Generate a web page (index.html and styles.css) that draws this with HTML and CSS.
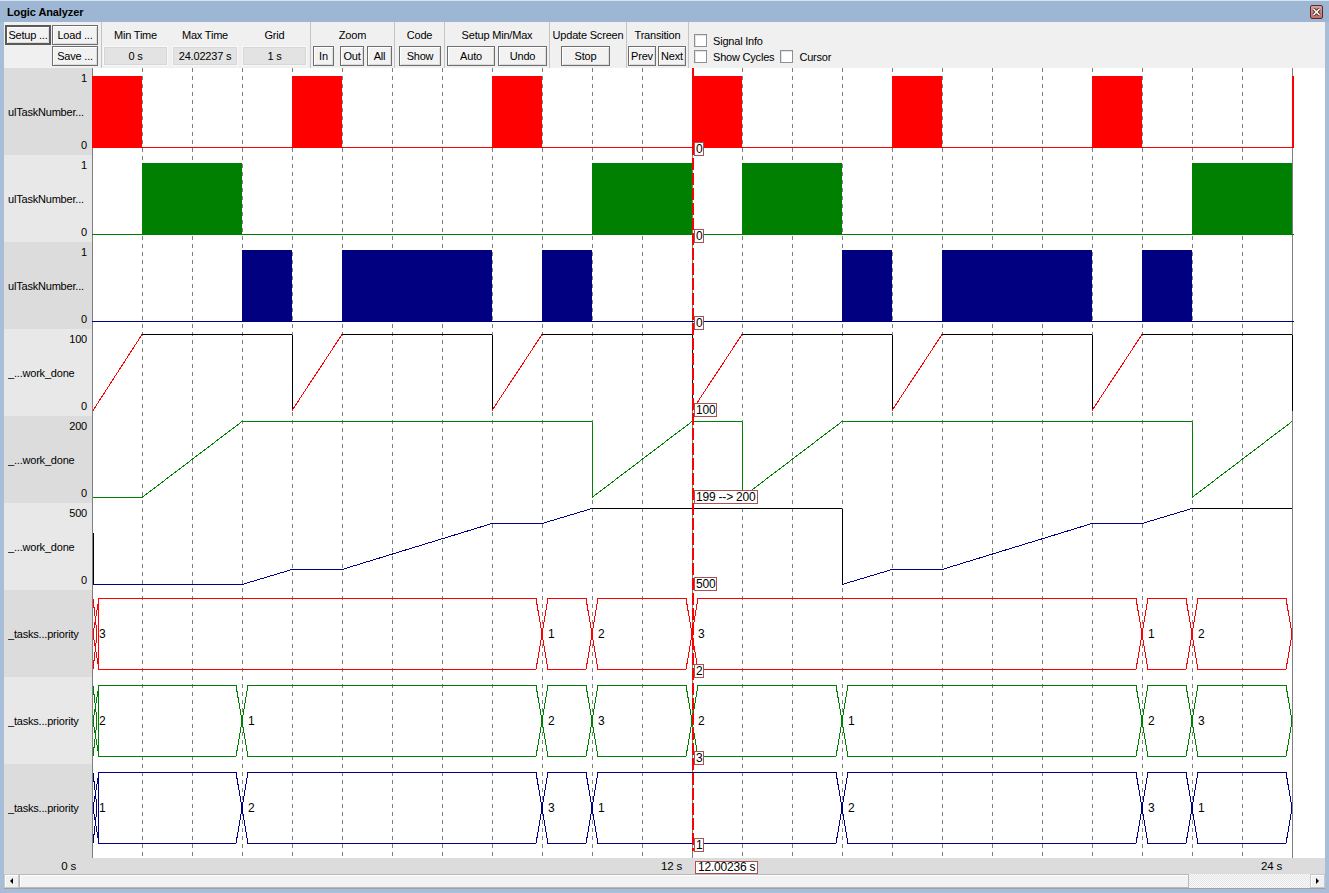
FILE: index.html
```html
<!DOCTYPE html>
<html>
<head>
<meta charset="utf-8">
<title>Logic Analyzer</title>
<link rel="stylesheet" href="styles.css">
</head>
<body>
<div class="window">
  <div class="titlebar">
    <span class="title">Logic Analyzer</span>
    <span class="close"><svg width="11" height="12" viewBox="0 0 11 12"><path d="M2.5 3 L8.5 9 M8.5 3 L2.5 9" stroke="#4a2020" stroke-width="3.2"/><path d="M2.5 3 L8.5 9 M8.5 3 L2.5 9" stroke="#ffffff" stroke-width="1.6"/></svg></span>
  </div>
  <div class="body">
    <div class="toolbar">
      <div class="group g-file">
        <button class="btn btn-default">Setup ...</button>
        <button class="btn">Load ...</button>
        <button class="btn btn-save">Save ...</button>
      </div>
      <div class="group g-time">
        <div class="field"><div class="gtitle">Min Time</div><div class="value w65">0 s</div></div>
        <div class="field"><div class="gtitle">Max Time</div><div class="value w66">24.02237 s</div></div>
        <div class="field"><div class="gtitle">Grid</div><div class="value w65">1 s</div></div>
      </div>
      <div class="group g-zoom">
        <div class="gtitle">Zoom</div>
        <div class="btnrow"><button class="btn b-in">In</button><button class="btn b-out">Out</button><button class="btn b-all">All</button></div>
      </div>
      <div class="group g-code">
        <div class="gtitle">Code</div>
        <div class="btnrow"><button class="btn b-show">Show</button></div>
      </div>
      <div class="group g-minmax">
        <div class="gtitle">Setup Min/Max</div>
        <div class="btnrow"><button class="btn b-auto">Auto</button><button class="btn b-undo">Undo</button></div>
      </div>
      <div class="group g-update">
        <div class="gtitle">Update Screen</div>
        <div class="btnrow"><button class="btn b-stop">Stop</button></div>
      </div>
      <div class="group g-trans">
        <div class="gtitle">Transition</div>
        <div class="btnrow"><button class="btn b-prev">Prev</button><button class="btn b-next">Next</button></div>
      </div>
      <div class="group g-opts">
        <label class="chk"><span class="box"></span><span>Signal Info</span></label>
        <div class="chkrow">
          <label class="chk"><span class="box"></span><span>Show Cycles</span></label>
          <label class="chk"><span class="box"></span><span>Cursor</span></label>
        </div>
      </div>
    </div>

    <div class="chart">
      <div class="labels">
        <div class="lrow"><span class="smax">1</span><span class="name">ulTaskNumber...</span><span class="smin">0</span></div>
        <div class="lrow light"><span class="smax">1</span><span class="name">ulTaskNumber...</span><span class="smin">0</span></div>
        <div class="lrow"><span class="smax">1</span><span class="name">ulTaskNumber...</span><span class="smin">0</span></div>
        <div class="lrow light"><span class="smax">100</span><span class="name">_...work_done</span><span class="smin">0</span></div>
        <div class="lrow"><span class="smax">200</span><span class="name">_...work_done</span><span class="smin">0</span></div>
        <div class="lrow light"><span class="smax">500</span><span class="name">_...work_done</span><span class="smin">0</span></div>
        <div class="lrow"><span class="smax"></span><span class="name">_tasks...priority</span><span class="smin"></span></div>
        <div class="lrow light"><span class="smax"></span><span class="name">_tasks...priority</span><span class="smin"></span></div>
        <div class="lrow"><span class="smax"></span><span class="name">_tasks...priority</span><span class="smin"></span></div>
      </div>
      <div class="plot">
        <svg id="plot" class="plot-svg" width="1233" height="790" viewBox="0 0 1233 790"></svg>
        <div class="cursor-vals">
          <span class="cv">0</span>
          <span class="cv">0</span>
          <span class="cv">0</span>
          <span class="cv">100</span>
          <span class="cv">199 --&gt; 200</span>
          <span class="cv">500</span>
          <span class="cv">2</span>
          <span class="cv">3</span>
          <span class="cv">1</span>
        </div>
      </div>
    </div>

    <div class="axis">
      <span class="tick t0">0 s</span>
      <span class="tick t12">12 s</span>
      <span class="tick t24">24 s</span>
      <span class="cursor-time">12.00236 s</span>
    </div>

    <div class="hscroll">
      <span class="sbtn"><span class="arr-l"></span></span>
      <span class="thumb"></span>
      <span class="track"></span>
      <span class="sbtn"><span class="arr-r"></span></span>
    </div>
  </div>
</div>
<script src="script.js"></script>
</body>
</html>
```

FILE: styles.css
```css
* { box-sizing: border-box; margin: 0; padding: 0; }
html, body { width: 1329px; height: 893px; overflow: hidden; }
body {
  margin: 0;
  font-family: "Liberation Sans", Arial, sans-serif;
  font-size: 11px;
  letter-spacing: -0.2px;
  color: #000;
  background: #a8bed8;
}
.window {
  width: 1329px;
  height: 893px;
  display: flex;
  flex-direction: column;
  background: #a8bed8;
  border-top: 1px solid #d8e4f0;
}
.titlebar {
  height: 21px;
  flex: none;
  background: #9db6d3;
  display: flex;
  align-items: center;
  justify-content: space-between;
  padding: 1px 6px 0 7px;
}
.title { font-weight: bold; font-size: 11px; letter-spacing: -0.1px; }
.close {
  width: 13px;
  height: 14px;
  border: 1px solid #5a2a2a;
  border-radius: 2px;
  background: linear-gradient(#d9a29c, #c06f68);
  display: flex;
  align-items: center;
  justify-content: center;
}
.close svg { display: block; }

.body {
  flex: 1;
  margin: 0 4px 4px 4px;
  display: flex;
  flex-direction: column;
  background: #f0f0f0;
  min-height: 0;
}

/* toolbar */
.toolbar { height: 46px; flex: none; display: flex; background: #f0f0f0; }
.group {
  border-right: 1px solid #c4c4c4;
  padding-top: 3px;
  display: flex;
  flex-direction: column;
}
.gtitle { height: 21px; line-height: 20px; text-align: center; white-space: nowrap; }
.btnrow { display: flex; height: 20px; }
.btn {
  font-family: inherit;
  font-size: 11px;
  letter-spacing: -0.2px;
  color: #000;
  height: 20px;
  background: #f2f2f2;
  border: 1px solid #6e6e6e;
  box-shadow: inset 1px 1px 0 #ffffff, inset -1px -1px 0 #dcdcdc;
  padding: 0;
  text-align: center;
  line-height: 17px;
  cursor: default;
}
.btn-default { border: 2px solid #5a5a5a; line-height: 15px; }

.g-file {
  width: 98px;
  display: grid;
  grid-template-columns: 46px 46px;
  grid-template-rows: 20px 20px;
  column-gap: 1px;
  row-gap: 1px;
  padding: 3px 0 0 1px;
}
.btn-save { grid-column: 2; grid-row: 2; }

.g-time { width: 209px; flex-direction: row; gap: 4px; padding-left: 1px; }
.field { display: flex; flex-direction: column; }
.value {
  height: 20px;
  line-height: 18px;
  text-align: center;
  background: #e3e3e3;
  border: 1px solid #f9f9f9;
  outline: 1px solid #d6d6d6;
  outline-offset: -2px;
}
.w65 { width: 65px; }
.w66 { width: 66px; }

.g-zoom { width: 84px; }
.g-zoom .btnrow { padding-left: 2px; }
.b-in { width: 21px; }
.b-out { width: 24px; margin-left: 6px; }
.b-all { width: 25px; margin-left: 3px; }

.g-code { width: 50px; }
.g-code .btnrow { padding-left: 4px; }
.b-show { width: 42px; }

.g-minmax { width: 105px; }
.g-minmax .btnrow { padding-left: 2px; }
.b-auto { width: 48px; }
.b-undo { width: 49px; margin-left: 3px; }

.g-update { width: 77px; }
.g-update .btnrow { padding-left: 11px; }
.b-stop { width: 49px; }

.g-trans { width: 62px; }
.g-trans .btnrow { padding-left: 1px; }
.b-prev { width: 28px; }
.b-next { width: 28px; margin-left: 2px; }

.g-opts { border-right: none; padding: 12px 0 0 5px; gap: 3px; flex: 1; }
.chkrow { display: flex; gap: 6px; }
.chk { display: flex; align-items: center; gap: 6px; height: 13px; white-space: nowrap; }
.box {
  width: 13px;
  height: 13px;
  background: #fff;
  border: 1px solid #8f8f8f;
  box-shadow: inset 1px 1px 0 #e2e2e2;
}

/* chart */
.chart { height: 790px; flex: none; display: flex; }
.labels {
  width: 88px;
  flex: none;
  background: #dcdcdc;
  display: flex;
  flex-direction: column;
}
.lrow {
  height: 87px;
  flex: none;
  display: grid;
  grid-template-rows: 20px 1fr 20px;
  padding: 0 5px 0 4px;
}
.lrow.light { background: #e8e8e8; }
.smax, .smin { text-align: right; line-height: 20px; }
.name { align-self: center; white-space: nowrap; overflow: hidden; }

.plot { position: relative; flex: 1; background: #fff; }
.plot-svg { display: block; shape-rendering: crispEdges; }
.plot-svg text { font-family: "Liberation Sans", Arial, sans-serif; font-size: 12px; letter-spacing: -0.2px; }

.cursor-vals {
  position: absolute;
  left: 602px;
  top: 0;
  display: grid;
  grid-template-rows: repeat(9, 87px);
}
.cv {
  align-self: start;
  justify-self: start;
  margin-top: 74px;
  height: 14px;
  line-height: 12px;
  padding: 0 1px;
  font-size: 12px;
  background: #fff;
  border: 1px solid #a85252;
  white-space: nowrap;
}

/* axis */
.axis { height: 16px; flex: none; position: relative; background: #dcdcdc; }
.tick { position: absolute; top: 1px; line-height: 14px; font-size: 11.5px; transform: translateX(-100%); }
.t0 { left: 72px; }
.t12 { left: 678px; }
.t24 { left: 1278px; }
.cursor-time {
  position: absolute;
  left: 691px;
  top: 3px;
  height: 13px;
  line-height: 11px;
  padding: 0 2px;
  font-size: 12px;
  background: #fff;
  border: 1px solid #a85252;
}

/* scrollbar */
.hscroll {
  height: 15px;
  flex: none;
  display: flex;
  background: #f0f0f0;
  border-bottom: 1px solid #a0a0a0;
}
.sbtn {
  width: 15px;
  flex: none;
  display: flex;
  align-items: center;
  justify-content: center;
  background: #f0f0f0;
  border: 1px solid #c8c8c8;
  box-shadow: inset 1px 1px 0 #fff;
}
.arr-l { width: 0; height: 0; border-top: 3px solid transparent; border-bottom: 3px solid transparent; border-right: 3px solid #000; }
.arr-r { width: 0; height: 0; border-top: 3px solid transparent; border-bottom: 3px solid transparent; border-left: 3px solid #000; }
.thumb {
  width: 1170px;
  flex: none;
  background: #f2f2f2;
  border: 1px solid #b8b8b8;
  box-shadow: inset 1px 1px 0 #fff;
}
.track {
  flex: 1;
  background-color: #f6f6f6;
  background-image: repeating-conic-gradient(#e4e4e4 0 25%, #fafafa 0 50%);
  background-size: 2px 2px;
}
```

FILE: script.js
```js
(function () {
  var NS = 'http://www.w3.org/2000/svg';
  var svg = document.getElementById('plot');
  var H = 790, RH = 87, PX = 50;
  var RED = '#ff0000', GREEN = '#008000', NAVY = '#000080', BLACK = '#000000', GRID = '#808080';

  function el(tag, a) {
    var e = document.createElementNS(NS, tag);
    for (var k in a) e.setAttribute(k, a[k]);
    svg.appendChild(e);
    return e;
  }
  function X(t) { return t * PX; }

  /* grid */
  el('line', { x1: 0.5, x2: 0.5, y1: 0, y2: H, stroke: GRID });
  for (var t = 1; t <= 23; t++) {
    if (t === 12) continue;
    el('line', { x1: X(t) + 0.5, x2: X(t) + 0.5, y1: 0, y2: H, stroke: GRID, 'stroke-dasharray': '4 4' });
  }
  el('line', { x1: 600.5, x2: 600.5, y1: 0, y2: H, stroke: GRID });
  el('line', { x1: 1200.5, x2: 1200.5, y1: 0, y2: H, stroke: GRID });

  /* digital signals */
  var digital = [
    { c: RED, hi: [[0, 1], [4, 5], [8, 9], [12, 13], [16, 17], [20, 21], [24, 24.04]] },
    { c: GREEN, hi: [[1, 3], [10, 12], [13, 15], [22, 24]] },
    { c: NAVY, hi: [[3, 4], [5, 8], [9, 10], [15, 16], [17, 20], [21, 22]] }
  ];
  digital.forEach(function (d, r) {
    var y0 = r * RH;
    el('line', { x1: 0, x2: 1202, y1: y0 + 79.5, y2: y0 + 79.5, stroke: d.c });
    d.hi.forEach(function (iv) {
      el('rect', { x: X(iv[0]), y: y0 + 8, width: Math.max(2, X(iv[1]) - X(iv[0])), height: 72, fill: d.c });
    });
  });

  /* analog signals */
  function Y(r, v, max) { return r * RH + 5 + Math.round((1 - v / max) * 76) + 0.5; }
  function analog(r, max, pts) {
    for (var i = 1; i < pts.length; i++) {
      var a = pts[i - 1], b = pts[i];
      el('line', { x1: X(a[0]) + (a[0] === 0 ? 1 : 0), y1: Y(r, a[1], max), x2: X(b[0]), y2: Y(r, b[1], max), stroke: b[2] });
    }
  }
  var p4 = [[0, 0]];
  for (var k = 0; k < 6; k++) {
    var s = 4 * k;
    p4.push([s + 1, 100, RED], [s + 4, 100, BLACK], [s + 4, 0, BLACK]);
    if (k < 5) p4.push([s + 4, 0, RED]);
  }
  analog(3, 100, p4);

  analog(4, 200, [[0, 0], [1, 0, GREEN], [3, 200, GREEN], [10, 200, GREEN], [10, 0, GREEN], [12, 200, GREEN],
    [13, 200, GREEN], [13, 0, GREEN], [15, 200, GREEN], [22, 200, GREEN], [22, 0, GREEN], [24, 200, GREEN]]);

  analog(5, 500, [[0, 0], [3, 0, NAVY], [4, 100, NAVY], [5, 100, NAVY], [8, 400, NAVY], [9, 400, NAVY], [10, 500, NAVY],
    [15, 500, BLACK], [15, 0, BLACK], [16, 100, NAVY], [17, 100, NAVY], [20, 400, NAVY], [21, 400, NAVY],
    [22, 500, NAVY], [24, 500, BLACK]]);
  el('line', { x1: 1.5, x2: 1.5, y1: 5 * RH + 30, y2: 5 * RH + 81, stroke: BLACK });

  /* bus signals */
  function bus(r, c, segs, end) {
    var top = r * RH + 8.5, bot = r * RH + 79.5, mid = r * RH + 44;
    for (var i = 0; i < segs.length; i++) {
      var xa = i === 0 ? 1 : X(segs[i][0]);
      var xb = i + 1 < segs.length ? X(segs[i + 1][0]) : X(end);
      var sl = 6;
      el('path', {
        d: 'M' + xa + ' ' + mid + ' L' + (xa + sl) + ' ' + top + ' L' + (xb - sl) + ' ' + top + ' L' + xb + ' ' + mid +
          ' L' + (xb - sl) + ' ' + bot + ' L' + (xa + sl) + ' ' + bot + ' Z',
        fill: 'none', stroke: c
      });
      var tx = el('text', { x: xa + sl + (i === 0 ? 0 : 0), y: mid + 4, fill: '#000' });
      tx.textContent = segs[i][1];
    }
    el('line', { x1: 6.5, x2: 6.5, y1: top, y2: bot, stroke: c, 'stroke-width': 1.5 });
    el('path', { d: 'M1 ' + top + ' L5 ' + mid + ' L1 ' + bot, fill: 'none', stroke: c });
  }
  bus(6, RED, [[0, '3'], [9, '1'], [10, '2'], [12, '3'], [21, '1'], [22, '2']], 24);
  bus(7, GREEN, [[0, '2'], [3, '1'], [9, '2'], [10, '3'], [12, '2'], [15, '1'], [21, '2'], [22, '3']], 24);
  bus(8, NAVY, [[0, '1'], [3, '2'], [9, '3'], [10, '1'], [15, '2'], [21, '3'], [22, '1']], 24);

  /* cursor */
  el('line', { x1: 601, x2: 601, y1: 0, y2: 9 * RH, stroke: RED, 'stroke-width': 2, 'stroke-dasharray': '12 3' });
})();
```
